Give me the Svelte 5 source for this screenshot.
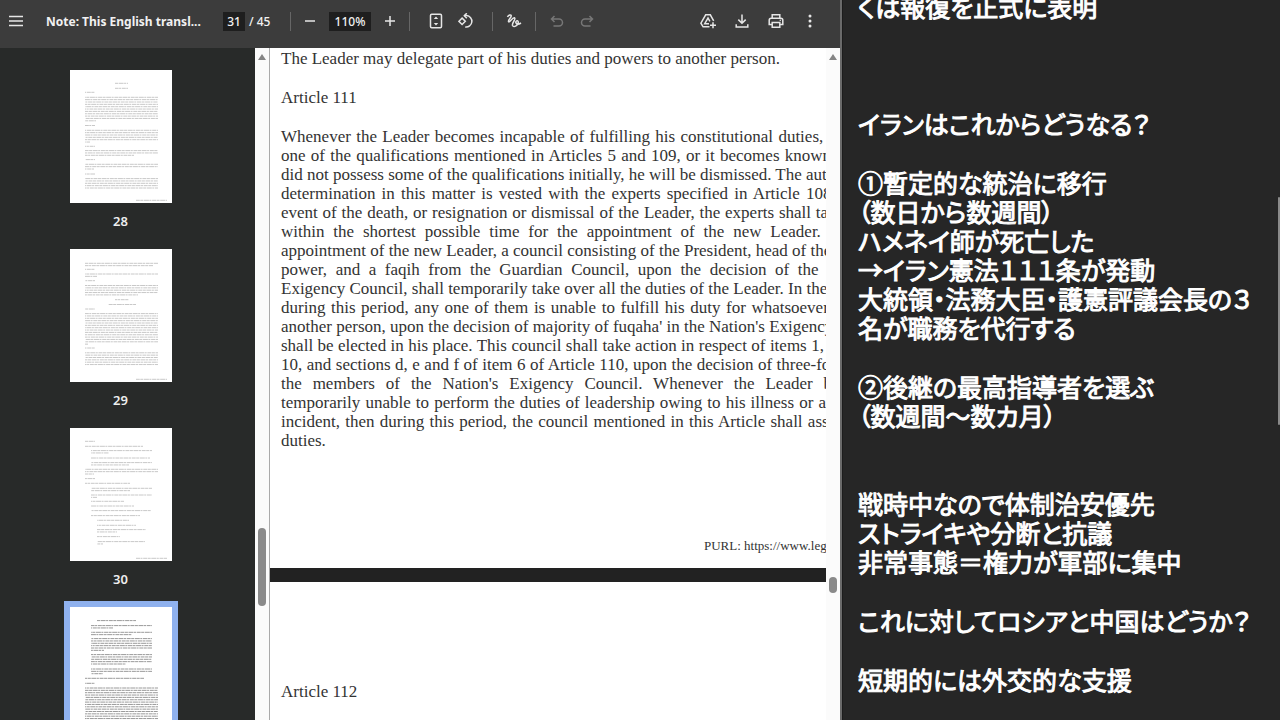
<script>
  let pageNumber = "31";
  let zoomLevel = "110%";

  // a run of text lines on a thumbnail: first line, count, left, right, right edge of last line
  const para = (y, count, x1 = 15, x2 = 88, last = x2) =>
    Array.from({ length: count }, (_, i) => ({
      y: y + i * 2.35,
      x1,
      x2: i == count - 1 ? last : x2
    }));
  const footer = para(130.3, 1, 66, 97);

  const thumbs = [
    {
      page: 28,
      lines: [
        para(13.3, 1, 45, 58), para(18.3, 1, 45, 58), para(22.3, 1, 15, 25),
        para(27.3, 11, 15, 88, 26), para(55.5, 1, 15, 25), para(60.3, 6, 15, 88, 20),
        para(76.3, 1, 15, 25), para(80.6, 3, 15, 88, 64), para(89.6, 1, 15, 25),
        para(94.3, 3, 15, 88, 24), para(104, 1, 15, 25), para(108.6, 5), footer
      ].flat()
    },
    {
      page: 29,
      lines: [
        para(14.3, 2, 15, 88, 83), para(20.3, 1, 15, 25), para(25, 2, 15, 88, 27),
        para(31.7, 1, 15, 25), para(36.5, 5, 15, 88, 68), para(50.7, 1, 45, 59),
        para(55.5, 1, 38, 66), para(60, 1, 15, 25), para(64.6, 14, 15, 88, 18),
        para(99, 1, 15, 25), para(103.8, 6), footer
      ].flat()
    },
    {
      page: 30,
      lines: [
        para(13.3, 1, 15, 25), para(18.3, 1, 15, 73), para(22.6, 2, 21, 82, 39),
        para(30, 1, 21, 80), para(34.6, 2, 21, 82, 59), para(41.3, 3, 15, 88, 24),
        para(50.6, 1, 15, 25), para(55.3, 1, 15, 60), para(60.3, 2, 21, 82, 60),
        para(67, 2, 21, 82, 27), para(73.3, 1, 21, 54), para(78, 1, 21, 64),
        para(82.6, 1, 21, 81), para(87.6, 1, 21, 70), para(92.3, 1, 27, 59),
        para(97.3, 1, 27, 66), para(101.6, 2, 27, 76, 47), para(108.6, 1, 27, 50),
        para(113.6, 2, 27, 75, 33), footer
      ].flat()
    },
    {
      page: 31,
      selected: true,
      lines: [
        para(13.6, 1, 27, 66), para(18.6, 2, 21, 82, 43), para(25.3, 2, 21, 82, 62),
        para(31.6, 6, 21, 82, 34), para(47.6, 5, 21, 82, 56), para(62, 3, 21, 82, 33),
        para(71.3, 1, 15, 74), para(76.3, 1, 15, 25), para(81, 17, 15, 88, 25), footer
      ].flat()
    }
  ];

  const article = [
    "Whenever the Leader becomes incapable of fulfilling his constitutional duties, or lacks",
    "one of the qualifications mentioned in Articles 5 and 109, or it becomes known that he",
    "did not possess some of the qualifications initially, he will be dismissed. The authority of",
    "determination in this matter is vested with the experts specified in Article 108. In the",
    "event of the death, or resignation or dismissal of the Leader, the experts shall take steps",
    "within the shortest possible time for the appointment of the new Leader. Till the",
    "appointment of the new Leader, a council consisting of the President, head of the judiciary",
    "power, and a faqih from the Guardian Council, upon the decision of the Nation's",
    "Exigency Council, shall temporarily take over all the duties of the Leader. In the event that,",
    "during this period, any one of them is unable to fulfill his duty for whatsoever reason,",
    "another person, upon the decision of majority of fuqaha' in the Nation's Exigency Council,",
    "shall be elected in his place. This council shall take action in respect of items 1, 3, 5 and",
    "10, and sections d, e and f of item 6 of Article 110, upon the decision of three-fourths of",
    "the members of the Nation's Exigency Council. Whenever the Leader becomes",
    "temporarily unable to perform the duties of leadership owing to his illness or any other",
    "incident, then during this period, the council mentioned in this Article shall assume his",
    "duties."
  ];
  // lines too full to be spread out
  const tight = [2, 6, 8, 10];

  const notes = [
    { lines: ["くは報復を正式に表明"] },
    { space: "wide", lines: ["イランはこれからどうなる？"] },
    {
      lines: [
        "①暫定的な統治に移行",
        "（数日から数週間）",
        "ハメネイ師が死亡した",
        "→イラン憲法１１１条が発動",
        "大統領・法務大臣・護憲評議会長の３",
        "名が職務を代行する"
      ]
    },
    { lines: ["②後継の最高指導者を選ぶ", "（数週間～数カ月）"] },
    {
      space: "double",
      lines: ["戦時中なので体制治安優先", "ストライキや分断と抗議", "非常事態＝権力が軍部に集中"]
    },
    { lines: ["これに対してロシアと中国はどうか？"] },
    { lines: ["短期的には外交的な支援"] }
  ];
</script>

<div class="screen">
  <section class="viewer">
    <header class="toolbar">
      <button class="menu" aria-label="Menu">
        <svg viewBox="0 0 16 16"><path d="M1 3.5h14M1 8h14M1 12.5h14" /></svg>
      </button>
      <h1>Note: This English transl...</h1>
      <div class="pages">
        <input aria-label="Page number" bind:value={pageNumber} />
        <span>/ 45</span>
      </div>
      <i class="sep"></i>
      <div class="zoom">
        <button aria-label="Zoom out">
          <svg viewBox="0 0 16 16"><path d="M3 8h10" /></svg>
        </button>
        <input aria-label="Zoom level" bind:value={zoomLevel} />
        <button aria-label="Zoom in">
          <svg viewBox="0 0 16 16"><path d="M3 8h10M8 3v10" /></svg>
        </button>
      </div>
      <i class="sep"></i>
      <div class="group view">
        <button aria-label="Fit to page">
          <svg viewBox="0 0 16 16">
            <rect x="2.5" y="1.2" width="11" height="13.6" rx="1.2" />
            <path class="solid" d="M8 3.4l2.2 2.6H5.8zM8 12.6l2.2-2.6H5.8z" />
          </svg>
        </button>
        <button aria-label="Rotate counterclockwise">
          <svg viewBox="0 0 16 16">
            <path d="M4.1 5.1L7.3 8.3 4.1 11.5.9 8.3z" />
            <path d="M6.4 2.6h2.2a5.7 5.7 0 1 1-1.4 11.3" />
            <path d="M8.8.2L6.3 2.7l2.5 2.5" />
          </svg>
        </button>
      </div>
      <i class="sep"></i>
      <div class="group">
        <button aria-label="Draw">
          <svg viewBox="0 0 16 16">
            <path d="M1.500 4C2.500 1.800 5.500 1.200 5.200 3.200 5 5 2 6.500 2.500 8.500 3.200 10.500 6.500 4 8.500 4.800 10.500 6 5.500 10 6.500 12.500 7.800 15 12.500 12 12.300 9 12 6.800 9 8 10 10 10.800 11.200 13 11.300 15 10" />
          </svg>
        </button>
      </div>
      <i class="sep"></i>
      <div class="group">
        <button aria-label="Undo" disabled>
          <svg viewBox="0 0 16 16"><path d="M5.5 3L2.500 6l3 3M2.500 6h7.500a3.500 3.500 0 0 1 0 7H4.500" /></svg>
        </button>
        <button aria-label="Redo" disabled>
          <svg viewBox="0 0 16 16"><path d="M10.500 3l3 3-3 3M13.500 6H6a3.500 3.500 0 0 0 0 7h5.500" /></svg>
        </button>
      </div>
      <div class="actions">
        <button aria-label="Save to Drive">
          <svg viewBox="0 0 16 16">
            <path d="M9.500 13.800H3.100L.9 10.200 5.700 1.800h4.600l3.400 6" />
            <path d="M9 10.700H4.700L8 5l1.900 3.400M13 9.300v6M10 12.300h6" />
          </svg>
        </button>
        <button aria-label="Download">
          <svg viewBox="0 0 16 16"><path d="M8 1.500v8.500M4.300 6.600L8 10.300l3.700-3.700M2.200 11.300v2.700h11.600v-2.700" /></svg>
        </button>
        <button aria-label="Print">
          <svg viewBox="0 0 16 16">
            <path d="M4.200 5V1.800h7.600V5M4.200 11.500H1.200V7.200Q1.200 5.200 3.200 5.200h9.600q2 0 2 2v4.300h-3" />
            <path d="M4.200 9.500h7.600v4.700H4.200z" />
            <circle class="solid" cx="12.300" cy="7.300" r=".8" />
          </svg>
        </button>
        <button aria-label="More actions">
          <svg viewBox="0 0 16 16">
            <circle class="solid" cx="8" cy="3" r="1.500" />
            <circle class="solid" cx="8" cy="8" r="1.500" />
            <circle class="solid" cx="8" cy="13" r="1.500" />
          </svg>
        </button>
      </div>
    </header>

    <div class="body">
      <nav class="sidebar">
        {#each thumbs as thumb}
          <button class="thumb" class:selected={thumb.selected} aria-label="Page {thumb.page}">
            <svg viewBox="0 0 102 133">
              {#each thumb.lines as line, i}
                <line x1={line.x1} x2={line.x2} y1={line.y} y2={line.y} stroke-dashoffset={i * 5} />
              {/each}
            </svg>
            {#if !thumb.selected}
              <span>{thumb.page}</span>
            {/if}
          </button>
        {/each}
      </nav>
      <div class="scrollbar side">
        <svg viewBox="0 0 10 8"><path d="M5 1l4 6H1z" /></svg>
        <b class="side-handle"></b>
      </div>
      <main class="document">
        <article class="sheet">
          <p>The Leader may delegate part of his duties and powers to another person.</p>
          <h2>Article 111</h2>
          <div class="justified">
            {#each article as line, i}
              <p class:tight={tight.includes(i)} class:last={i == article.length - 1}>{line}</p>
            {/each}
          </div>
          <p class="purl">PURL: https://www.legal-tools.org/</p>
        </article>
        <article class="sheet next">
          <h2>Article 112</h2>
        </article>
      </main>
      <div class="scrollbar">
        <svg viewBox="0 0 10 8"><path d="M5 1l4 6H1z" /></svg>
        <b class="doc-handle"></b>
      </div>
    </div>
  </section>

  <aside class="notes">
    {#each notes as note}
      <div class="note {note.space ?? ''}">
        {#each note.lines as line}
          <p>{line}</p>
        {/each}
      </div>
    {/each}
    <svg class="cursor" viewBox="0 0 8 16"><path d="M1 1h2l1 1 1-1h2M4 2v12M1 15h2l1-1 1 1h2" /></svg>
    <b class="notes-handle"></b>
  </aside>
</div>

<style>
  :global(body) {
    margin: 0;
    background: #262626;
  }
  p,
  h1,
  h2 {
    margin: 0;
    font-weight: normal;
  }
  button {
    padding: 0;
    border: 0;
    background: none;
    color: inherit;
    font: inherit;
  }
  .screen {
    display: grid;
    grid-template-columns: 842fr 438fr;
    height: 100vh;
    overflow: hidden;
  }
  .viewer {
    display: flex;
    flex-direction: column;
    min-width: 0;
    min-height: 0;
    box-sizing: border-box;
    border-right: 2px solid #6a6a6a;
  }

  .toolbar {
    display: flex;
    align-items: center;
    flex: none;
    height: 48px;
    padding-bottom: 6px;
    box-sizing: border-box;
    background: #3c3c3c;
    color: #f1f1f1;
    font-family: "Noto Sans", "Open Sans", sans-serif;
    font-size: 12px;
    font-weight: 500;
  }
  .toolbar button {
    display: flex;
    align-items: center;
    justify-content: center;
    width: 30px;
    height: 30px;
  }
  .toolbar svg {
    width: 16px;
    height: 16px;
    fill: none;
    stroke: #e6e6e6;
    stroke-width: 1.5;
  }
  .toolbar .solid {
    fill: #e6e6e6;
    stroke: none;
  }
  .toolbar button:disabled svg {
    stroke: #777;
  }
  .toolbar input {
    box-sizing: border-box;
    width: 22px;
    height: 19px;
    padding: 0;
    border: 0;
    background: #1e1e1e;
    color: inherit;
    font: inherit;
    text-align: center;
  }
  .toolbar .menu {
    width: 32px;
  }
  h1 {
    width: 177px;
    margin-left: 14px;
    font-size: 12px;
    font-weight: 700;
    white-space: nowrap;
  }
  .pages {
    display: flex;
    align-items: center;
    gap: 4px;
    width: 63px;
  }
  .sep {
    width: 1px;
    height: 19px;
    margin: 0 4px;
    background: #666;
  }
  .zoom {
    display: flex;
    align-items: center;
    gap: 4px;
  }
  .toolbar .zoom input {
    width: 42px;
  }
  .group {
    display: flex;
    padding: 0 2px;
  }
  .view {
    padding: 0 7px;
  }
  .actions {
    display: flex;
    gap: 4px;
    margin-left: auto;
    padding-right: 15px;
  }

  .body {
    display: flex;
    flex: 1;
    min-height: 0;
  }
  .sidebar {
    flex: none;
    display: flex;
    flex-direction: column;
    align-items: center;
    width: 255px;
    padding: 16px 14px 0 0;
    box-sizing: border-box;
    background: #282a29;
    overflow: hidden;
  }
  .thumb {
    flex: none;
    display: flex;
    flex-direction: column;
    align-items: center;
    height: 179px;
    color: #eee;
    font: 600 13px/18px "Noto Sans", "Open Sans", sans-serif;
  }
  .thumb svg {
    width: 102px;
    height: 133px;
    border: 6px solid transparent;
    background: #fff;
    background-clip: padding-box;
    stroke: #c8c8c8;
    stroke-width: 1;
    stroke-dasharray: 3 0.6 5 0.5 2 0.7 4 0.5;
  }
  .selected svg {
    border-color: #8fb1ee;
    stroke: #9a9a9a;
  }
  .thumb span {
    margin-top: 3px;
  }
  .scrollbar {
    position: relative;
    flex: none;
    width: 14px;
    box-sizing: border-box;
    padding-top: 4px;
    background: #fbfbfb;
    text-align: center;
    line-height: 8px;
  }
  .scrollbar.side {
    width: 15px;
    border-right: 1px solid #aaa;
  }
  .scrollbar svg {
    width: 10px;
    height: 8px;
    fill: #858585;
  }
  .scrollbar b,
  .notes-handle {
    position: absolute;
    right: 3px;
    width: 8px;
    border-radius: 4px;
    background: #8a8a8a;
  }
  .side-handle {
    top: 480px;
    height: 78px;
  }
  .doc-handle {
    top: 529px;
    height: 16px;
  }

  .document {
    flex: 1;
    display: flex;
    flex-direction: column;
    gap: 14px;
    min-width: 0;
    overflow: hidden;
    background: #222;
    color: #333;
    font: 17px/19px "Liberation Serif", "Times New Roman", serif;
    white-space: nowrap;
  }
  .sheet {
    flex: none;
    padding: 1px 0 13px 11px;
    background: #fff;
  }
  h2 {
    margin: 20px 0;
    font-size: 17px;
  }
  .justified {
    width: 602px;
  }
  .justified p {
    white-space: normal;
    text-align: justify;
    text-align-last: justify;
  }
  .justified p.tight {
    white-space: nowrap;
  }
  .justified p.last {
    text-align-last: left;
  }
  .purl {
    margin: 86px 0 0 423px;
    font-size: 13px;
  }
  .next {
    padding-top: 80px;
    flex: 1;
  }

  .notes {
    position: relative;
    padding-left: 15px;
    border-left: 1px solid #1c1c1c;
    background: #262626;
    color: #fff;
    font: 700 25px/29px "Noto Sans CJK JP", sans-serif;
    font-feature-settings: "palt";
    -webkit-text-stroke: 1px #fff;
    white-space: nowrap;
    overflow: hidden;
  }
  .note {
    margin-top: 30px;
  }
  .note:first-child {
    margin-top: -8px;
  }
  .wide {
    margin-top: 88px;
  }
  .double {
    margin-top: 59px;
  }
  .cursor {
    position: absolute;
    top: 504px;
    left: 20px;
    width: 8px;
    height: 16px;
    fill: none;
    stroke: #111;
  }
  .notes-handle {
    top: 197px;
    right: 0;
    width: 2px;
    height: 228px;
    border-radius: 1px;
  }
</style>
